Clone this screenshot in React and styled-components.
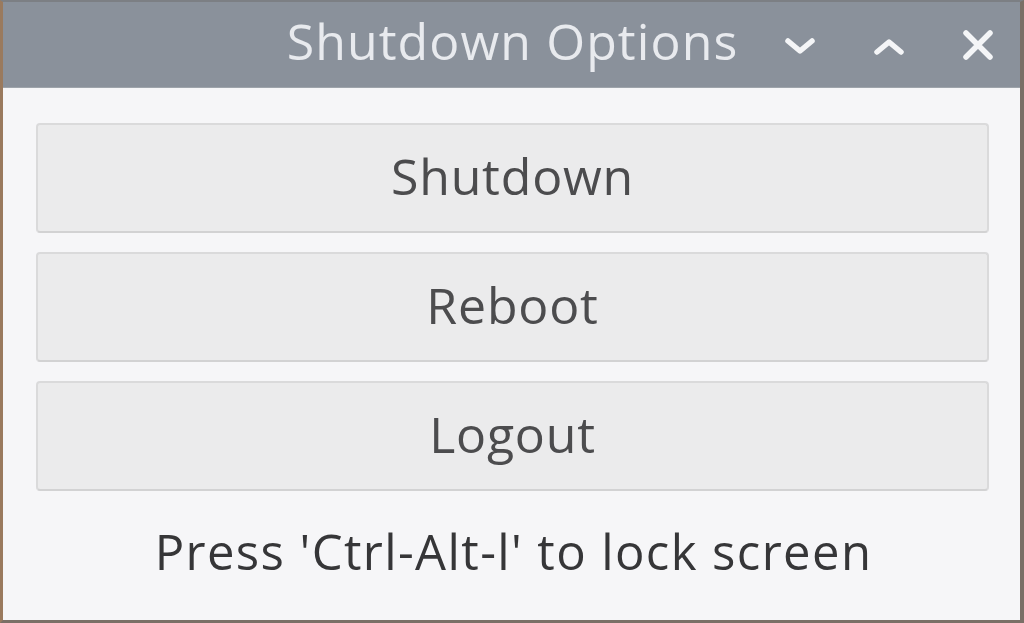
import React from "react";
import styled, { createGlobalStyle } from "styled-components";

const GlobalStyle = createGlobalStyle`
  html, body {
    margin: 0;
    padding: 0;
    background: #f6f6f8;
  }
  body {
    font-family: "Open Sans", "Noto Sans", sans-serif;
  }
`;

const Window = styled.div`
  width: 1024px;
  height: 623px;
  box-sizing: border-box;
  display: flex;
  flex-direction: column;
  background: #f6f6f8;
  border-top: 2px solid #7c7f84;
  border-left: 3px solid #9a7a5e;
  border-right: 4px solid #7a6f66;
  border-bottom: 3px solid #7a6f66;
`;

const TitleBar = styled.div`
  height: 85px;
  flex-shrink: 0;
  background: #8a919b;
  border-bottom: 1px solid #9ea4ab;
  position: relative;
  display: flex;
  align-items: center;
  justify-content: center;
`;

const Title = styled.div`
  color: #e8eaee;
  font-size: 50px;
  font-weight: 400;
  letter-spacing: 1.1px;
  line-height: 1;
  margin-top: -8px;
  margin-left: 2px;
`;

const Controls = styled.div`
  position: absolute;
  right: 26px;
  top: 0;
  bottom: 0;
  display: flex;
  align-items: center;
  gap: 57px;
`;

const IconBtn = styled.div`
  width: 32px;
  height: 32px;
  display: flex;
  align-items: center;
  justify-content: center;
  margin-top: ${(p) => p.$dy || 0}px;
`;

const Body = styled.div`
  flex: 1;
  display: flex;
  flex-direction: column;
  padding: 35px 31px 0 33px;
  gap: 19px;
`;

const Button = styled.div`
  height: 110px;
  box-sizing: border-box;
  background: #ebebec;
  border: 2px solid #dadadb;
  border-bottom-color: #d2d2d3;
  border-radius: 4px;
  display: flex;
  align-items: center;
  justify-content: center;
  color: #4c4c4e;
  font-size: 50px;
  letter-spacing: 0.8px;
  padding-bottom: 4px;
`;

const Hint = styled.div`
  text-align: center;
  color: #363638;
  font-size: 49px;
  letter-spacing: 1.4px;
  margin-top: 8px;
  margin-left: 2px;
`;

const Chevron = ({ up }) => (
  <svg width="32" height="20" viewBox="0 0 32 20">
    <path
      d={up ? "M4 16 L16 6 L28 16" : "M4 5 L16 15 L28 5"}
      fill="none"
      stroke="#f4f5f7"
      strokeWidth="5.5"
      strokeLinecap="round"
      strokeLinejoin="round"
    />
  </svg>
);

const Close = () => (
  <svg width="32" height="30" viewBox="0 0 32 30">
    <path
      d="M4 3 L28 27 M28 3 L4 27"
      fill="none"
      stroke="#f4f5f7"
      strokeWidth="5.5"
      strokeLinecap="round"
    />
  </svg>
);

const App = () => (
  <>
    <GlobalStyle />
    <Window>
      <TitleBar>
        <Title>Shutdown Options</Title>
        <Controls>
          <IconBtn $dy={3}>
            <Chevron />
          </IconBtn>
          <IconBtn $dy={3}>
            <Chevron up />
          </IconBtn>
          <IconBtn>
            <Close />
          </IconBtn>
        </Controls>
      </TitleBar>
      <Body>
        <Button>Shutdown</Button>
        <Button>Reboot</Button>
        <Button>Logout</Button>
        <Hint>Press 'Ctrl-Alt-l' to lock screen</Hint>
      </Body>
    </Window>
  </>
);

export default App;
